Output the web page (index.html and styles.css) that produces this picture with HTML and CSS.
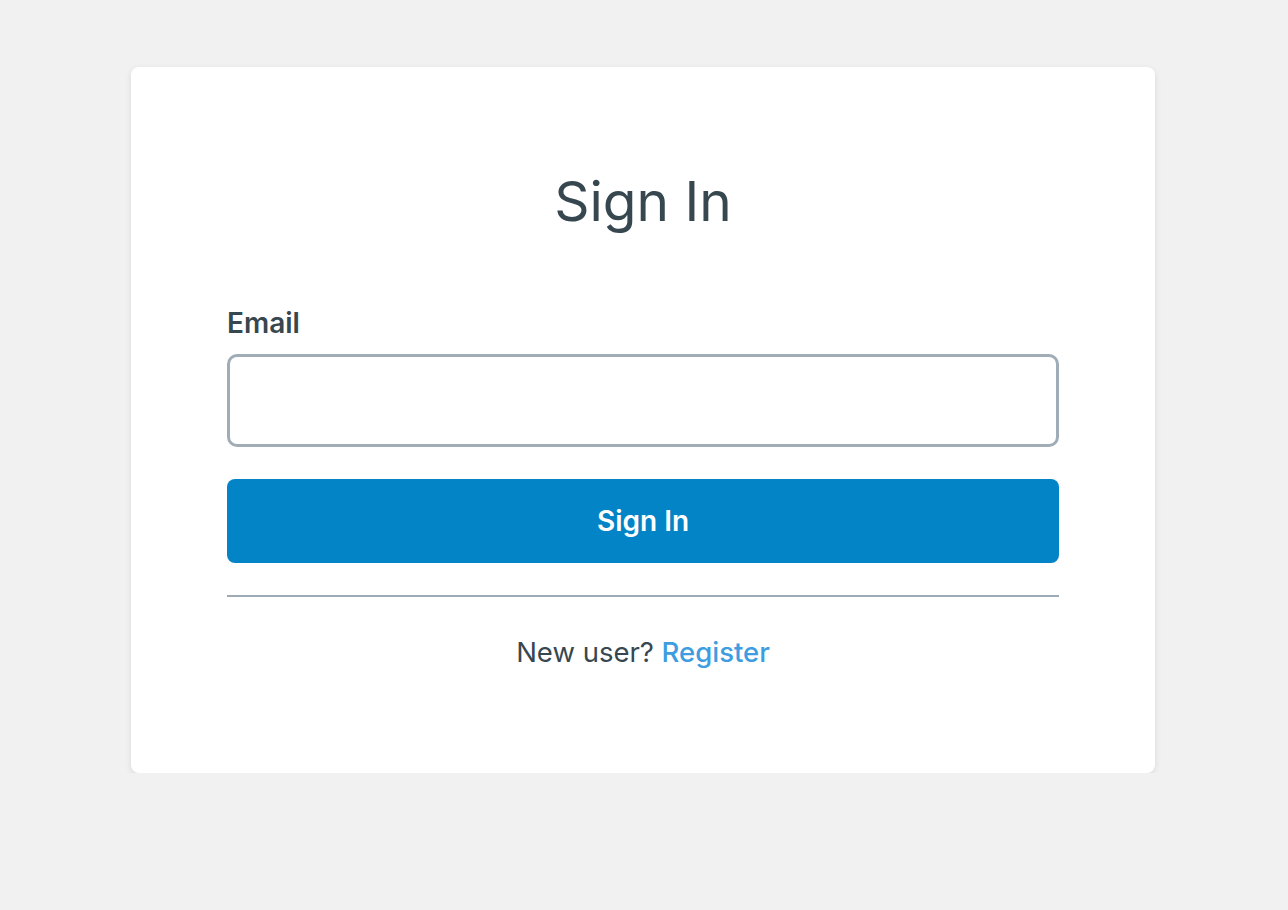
FILE: index.html
```html
<!DOCTYPE html>
<html lang="en">
<head>
    <meta charset="UTF-8">
    <meta name="viewport" content="width=device-width, initial-scale=1.0">
    <title>Sign In</title>
    <link rel="stylesheet" href="styles.css">
</head>
<body>

    <div class="card">
        <h1 class="title">Sign In</h1>
        <form class="form" onsubmit="return false">
            <label class="label" for="email">Email</label>
            <input class="input" type="email" id="email">
            <button class="btn" type="submit">Sign In</button>
        </form>
        <hr class="divider">
        <p class="footer">New user? <a href="#" class="link">Register</a></p>
    </div>

</body>
</html>
```

FILE: styles.css
```css
body {
    margin: 0;
    background-color: #f1f1f1;
    color: #37474f;
    font-family: Inter, "Noto Sans", sans-serif;
}
.card {
    width: 1024px;
    box-sizing: border-box;
    margin: 67px auto 0 calc(50% - 513px);
    padding: 101px 96px 104px;
    background: #fff;
    border-radius: 8px;
    box-shadow: 0 2px 6px rgba(0, 0, 0, 0.1);
}
.title {
    margin: 0 0 72px;
    text-align: center;
    font-size: 55px;
    font-weight: 400;
    line-height: 66px;
}
.form {
    display: flex;
    flex-direction: column;
}
.label {
    font-size: 28px;
    font-weight: 600;
    line-height: 34px;
    margin-bottom: 14px;
}
.input {
    height: 93px;
    box-sizing: border-box;
    border: 3px solid #a0adb6;
    border-radius: 10px;
    font-size: 24px;
    padding: 0 16px;
    outline: none;
}
.btn {
    margin-top: 32px;
    height: 84px;
    border: none;
    border-radius: 8px;
    background: #0384c6;
    color: #fff;
    font-family: inherit;
    font-size: 28px;
    font-weight: 600;
    cursor: pointer;
}
.divider {
    margin: 32px 0 0;
    border: none;
    border-top: 2px solid #9eabb4;
}
.footer {
    margin: 38px 0 0;
    text-align: center;
    font-size: 27.5px;
    line-height: 34px;
}
.link {
    color: #3d9de0;
    text-decoration: none;
    font-weight: 500;
}
```
